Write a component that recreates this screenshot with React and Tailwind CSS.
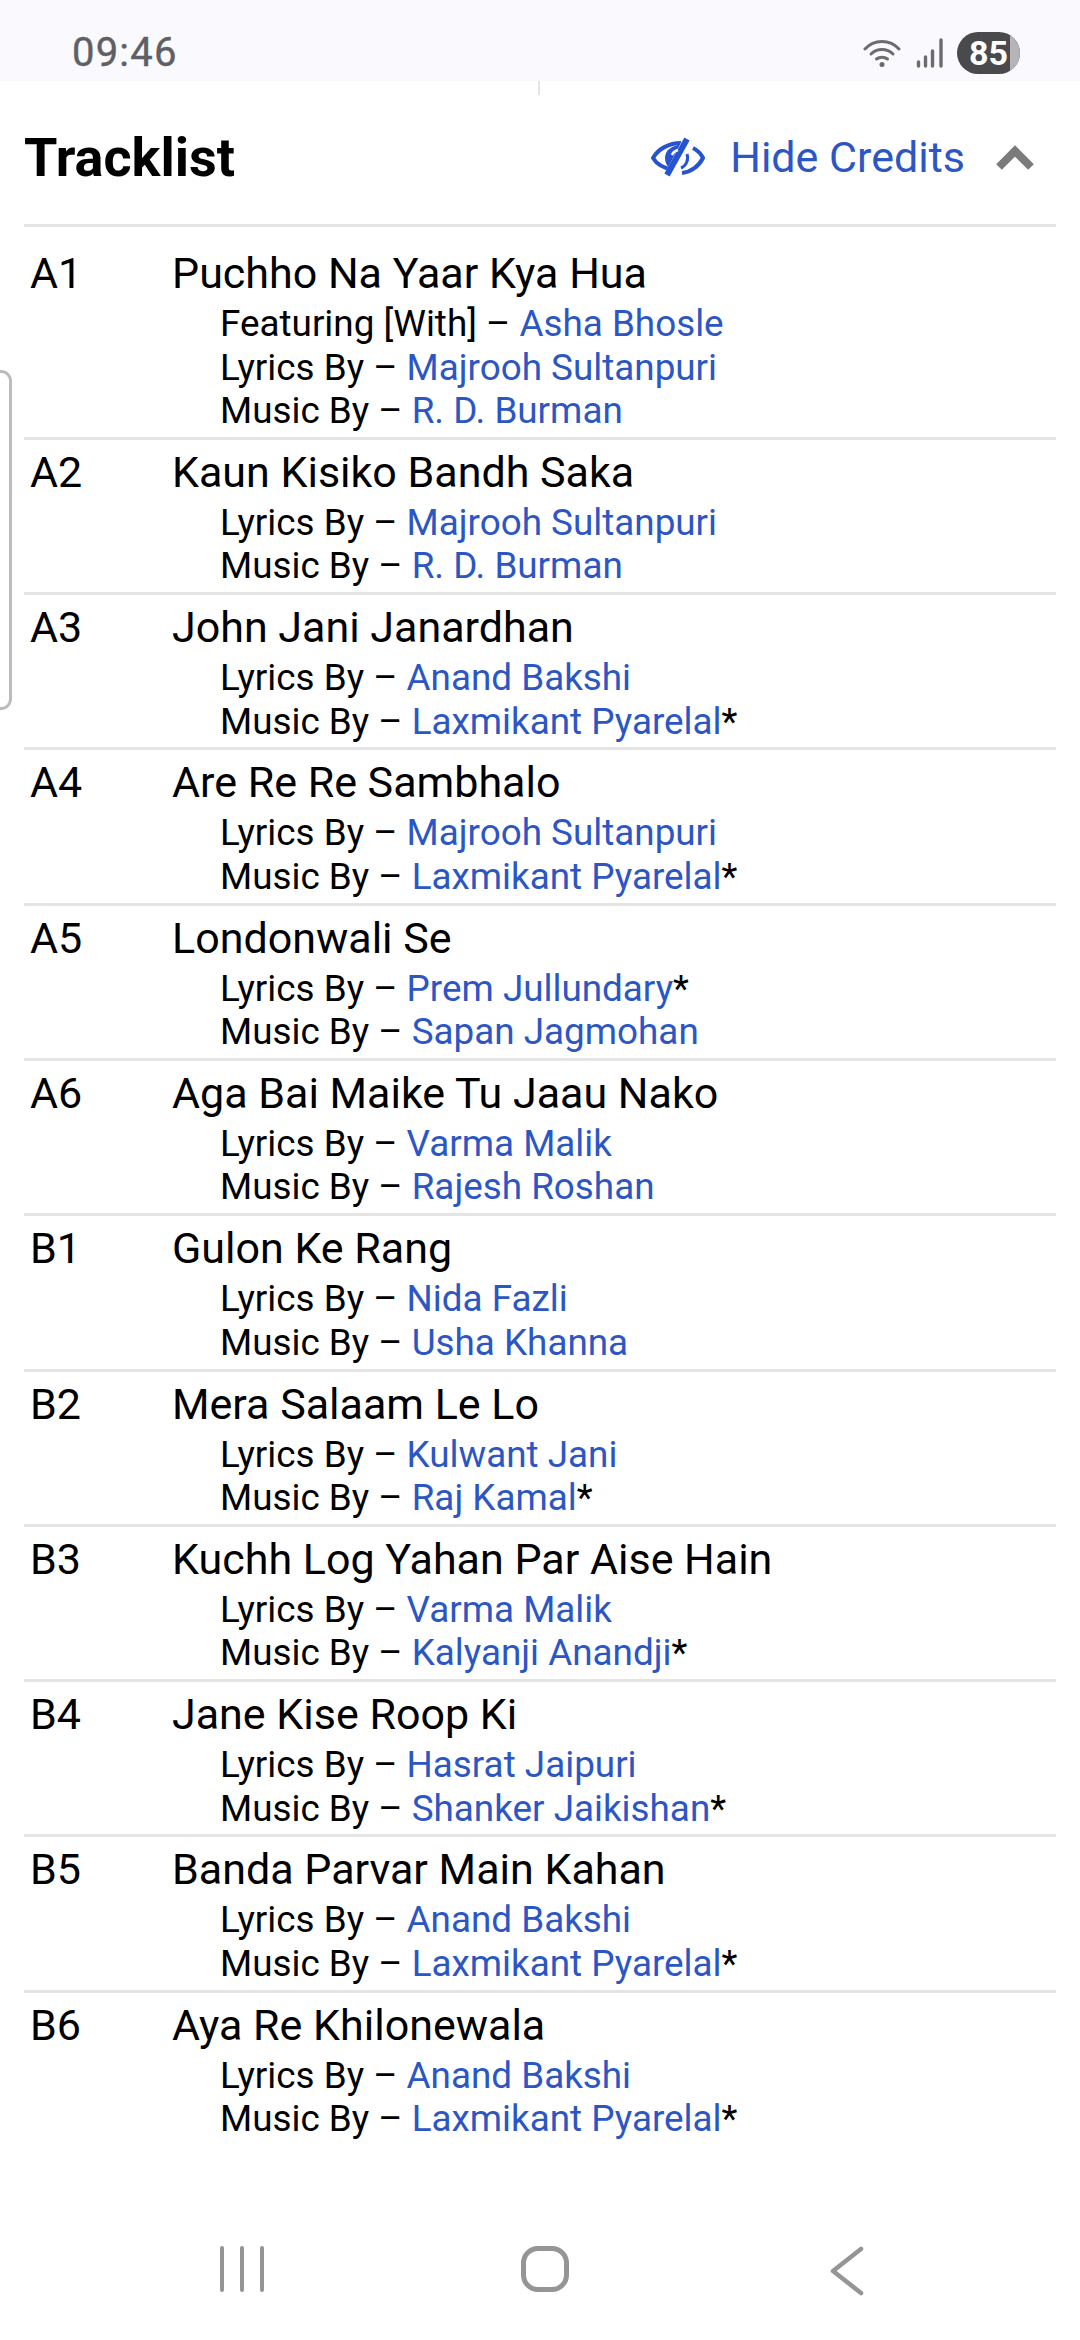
const tracks = [
  { pos: 'A1', title: 'Puchho Na Yaar Kya Hua', credits: [
    { role: 'Featuring [With]', name: 'Asha Bhosle' },
    { role: 'Lyrics By', name: 'Majrooh Sultanpuri' },
    { role: 'Music By', name: 'R. D. Burman' },
  ] },
  { pos: 'A2', title: 'Kaun Kisiko Bandh Saka', credits: [
    { role: 'Lyrics By', name: 'Majrooh Sultanpuri' },
    { role: 'Music By', name: 'R. D. Burman' },
  ] },
  { pos: 'A3', title: 'John Jani Janardhan', credits: [
    { role: 'Lyrics By', name: 'Anand Bakshi' },
    { role: 'Music By', name: 'Laxmikant Pyarelal', star: true },
  ] },
  { pos: 'A4', title: 'Are Re Re Sambhalo', credits: [
    { role: 'Lyrics By', name: 'Majrooh Sultanpuri' },
    { role: 'Music By', name: 'Laxmikant Pyarelal', star: true },
  ] },
  { pos: 'A5', title: 'Londonwali Se', credits: [
    { role: 'Lyrics By', name: 'Prem Jullundary', star: true },
    { role: 'Music By', name: 'Sapan Jagmohan' },
  ] },
  { pos: 'A6', title: 'Aga Bai Maike Tu Jaau Nako', credits: [
    { role: 'Lyrics By', name: 'Varma Malik' },
    { role: 'Music By', name: 'Rajesh Roshan' },
  ] },
  { pos: 'B1', title: 'Gulon Ke Rang', credits: [
    { role: 'Lyrics By', name: 'Nida Fazli' },
    { role: 'Music By', name: 'Usha Khanna' },
  ] },
  { pos: 'B2', title: 'Mera Salaam Le Lo', credits: [
    { role: 'Lyrics By', name: 'Kulwant Jani' },
    { role: 'Music By', name: 'Raj Kamal', star: true },
  ] },
  { pos: 'B3', title: 'Kuchh Log Yahan Par Aise Hain', credits: [
    { role: 'Lyrics By', name: 'Varma Malik' },
    { role: 'Music By', name: 'Kalyanji Anandji', star: true },
  ] },
  { pos: 'B4', title: 'Jane Kise Roop Ki', credits: [
    { role: 'Lyrics By', name: 'Hasrat Jaipuri' },
    { role: 'Music By', name: 'Shanker Jaikishan', star: true },
  ] },
  { pos: 'B5', title: 'Banda Parvar Main Kahan', credits: [
    { role: 'Lyrics By', name: 'Anand Bakshi' },
    { role: 'Music By', name: 'Laxmikant Pyarelal', star: true },
  ] },
  { pos: 'B6', title: 'Aya Re Khilonewala', credits: [
    { role: 'Lyrics By', name: 'Anand Bakshi' },
    { role: 'Music By', name: 'Laxmikant Pyarelal', star: true },
  ] },
];

const StatusBar = () => (
  <div className="flex h-[81px] items-center justify-between bg-[#f9f9fe] pl-[72px] pr-[60px] pt-[24px]">
    <span className="text-[40px] leading-none tracking-[1.2px] text-[#5f5f64] [-webkit-text-stroke:0.4px_#5f5f64]">09:46</span>
    <div className="flex items-center">
      <svg width="38" height="30" viewBox="0 0 38 30" fill="none" stroke="#6b6b70" strokeWidth="3" strokeLinecap="round">
        <path d="M2 11C11 1 27 1 36 11" />
        <path d="M8 16C14 10 24 10 30 16" />
        <path d="M13.5 21C16.5 18.5 21.5 18.5 24.5 21" />
        <circle cx="19" cy="26.5" r="2.5" fill="#6b6b70" stroke="none" />
      </svg>
      <svg className="ml-[15px]" width="28" height="30" viewBox="0 0 28 30" fill="none" stroke="#6b6b70" strokeWidth="3.4" strokeLinecap="round">
        <path d="M2.5 24V28" />
        <path d="M9.5 19V28" />
        <path d="M16.5 13V28" />
        <path d="M25 2V28" />
      </svg>
      <div className="relative ml-[13px] flex h-[42px] w-[63px] items-center overflow-hidden rounded-full bg-[#4a4a4d] pl-[12px]">
        <span className="text-[34px] font-bold leading-none text-white">85</span>
        <div className="absolute inset-y-0 right-0 w-[10px] bg-[#b5b5b9]" />
      </div>
    </div>
  </div>
);

const EyeOffIcon = () => (
  <svg width="54" height="42" viewBox="0 0 54 42" fill="none">
    <path d="M22 33C12 31 5 26 2 21C7 12 18 6 30 6" stroke="#2653d1" strokeWidth="4" />
    <path d="M31 36C40 35 48 29 52 21C50 17 46 13 42 11" stroke="#2653d1" strokeWidth="4" />
    <path d="M14 21C14 13 21 8 33 7L19 32C16 29 14 26 14 21Z" fill="#2653d1" />
    <path d="M36 17C38 23 35 29 30 31" stroke="#2653d1" strokeWidth="3" />
    <path d="M37 2L18 38" stroke="#ffffff" strokeWidth="9" />
    <path d="M36 2L16 38" stroke="#2653d1" strokeWidth="6" />
    <path d="M21 18C22 15 24 14 27 13" stroke="#ffffff" strokeWidth="2.5" />
  </svg>
);

const Header = () => (
  <div className="mx-[24px] flex h-[146px] items-center justify-between border-b-[3px] border-[#e4e4e4] pt-[10px]">
    <h2 className="text-[54px] font-bold leading-none text-black">Tracklist</h2>
    <div className="mr-[22px] flex items-center">
      <EyeOffIcon />
      <span className="ml-[25px] text-[43px] leading-none text-[#2c56c4]">Hide Credits</span>
      <svg className="ml-[31px]" width="38" height="26" viewBox="0 0 38 26" fill="none" stroke="#7b7b7b" strokeWidth="8">
        <path d="M3 22L19 6L35 22" />
      </svg>
    </div>
  </div>
);

const TrackRow = ({ track, first }) => (
  <div className={`flex border-b-[3px] border-[#e4e4e4] last:border-b-0 ${first ? 'pt-[17px]' : 'pt-[3px]'} pb-[4.3px]`}>
    <div className="w-[148px] shrink-0 pl-[6px] text-[43px] leading-[58px] text-black">{track.pos}</div>
    <div>
      <div className="text-[43px] leading-[58px] text-black">{track.title}</div>
      <div className="pl-[48px]">
        {track.credits.map((c) => (
          <div key={c.role} className="text-[36.85px] leading-[43.5px] text-black">
            {c.role} – <span className="text-[#2c56c4]">{c.name}</span>{c.star ? '*' : ''}
          </div>
        ))}
      </div>
    </div>
  </div>
);

const NavBar = () => (
  <div className="flex h-[150px] items-start pt-[56px]">
    <svg className="ml-[219px]" width="46" height="46" viewBox="0 0 46 46" fill="none" stroke="#959595" strokeWidth="4" strokeLinecap="round">
      <path d="M3 2V44" />
      <path d="M23 2V44" />
      <path d="M43 2V44" />
    </svg>
    <div className="ml-[256px] h-[46px] w-[48px] rounded-[17px] border-[5px] border-[#959595]" />
    <svg className="ml-[261px]" width="34" height="50" viewBox="0 0 34 50" fill="none" stroke="#959595" strokeWidth="4.5" strokeLinecap="round" strokeLinejoin="round">
      <path d="M31 3L3 25L31 47" />
    </svg>
  </div>
);

export default function App() {
  return (
    <div className="relative flex h-[2340px] w-[1080px] flex-col overflow-hidden bg-white font-['Roboto',sans-serif]">
      <StatusBar />
      {/* thin tick under the status bar */}
      <div className="absolute left-[538px] top-[81px] h-[14px] w-[2px] bg-[#e4e4e4]" />
      {/* edge panel handle */}
      <div className="absolute -left-[10px] top-[370px] h-[340px] w-[22px] rounded-[12px] border-[3px] border-[#bcbcbc]" />
      <Header />
      <div className="mx-[24px] flex-1">
        {tracks.map((t, i) => (
          <TrackRow key={t.pos} track={t} first={i === 0} />
        ))}
      </div>
      <NavBar />
    </div>
  );
}
